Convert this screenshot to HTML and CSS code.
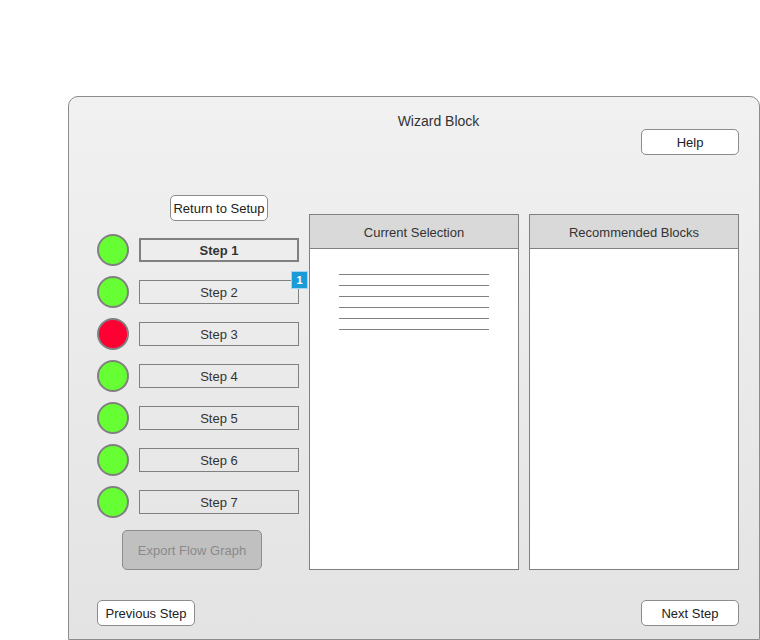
FILE: index.html
```html
<!DOCTYPE html>
<html>
<head>
<meta charset="utf-8">
<link rel="stylesheet" href="styles.css">
</head>
<body>
<div class="window">
  <div class="title">Wizard Block</div>
  <div class="help-row"><button class="btn help">Help</button></div>
  <div class="main">
    <div class="left">
      <button class="btn return">Return to Setup</button>
      <div class="steps">
        <div class="step"><span class="dot green"></span><span class="label active">Step 1</span></div>
        <div class="step"><span class="dot green"></span><span class="label">Step 2<span class="badge">1</span></span></div>
        <div class="step"><span class="dot red"></span><span class="label">Step 3</span></div>
        <div class="step"><span class="dot green"></span><span class="label">Step 4</span></div>
        <div class="step"><span class="dot green"></span><span class="label">Step 5</span></div>
        <div class="step"><span class="dot green"></span><span class="label">Step 6</span></div>
        <div class="step"><span class="dot green"></span><span class="label">Step 7</span></div>
      </div>
      <button class="export">Export Flow Graph</button>
    </div>
    <div class="panel">
      <div class="panel-head">Current Selection</div>
      <div class="panel-body">
        <div class="lines">
          <div class="line"></div><div class="line"></div><div class="line"></div>
          <div class="line"></div><div class="line"></div><div class="line"></div>
        </div>
      </div>
    </div>
    <div class="panel">
      <div class="panel-head">Recommended Blocks</div>
      <div class="panel-body"></div>
    </div>
  </div>
  <div class="footer">
    <button class="btn">Previous Step</button>
    <button class="btn">Next Step</button>
  </div>
</div>
</body>
</html>
```
FILE: styles.css
```css
html, body {
  margin: 0;
  padding: 0;
  background: #ffffff;
}
body {
  padding: 96px 0 0 68px;
  font-family: "Liberation Sans", Arial, sans-serif;
  font-size: 13px;
  color: #333333;
}
.window {
  box-sizing: border-box;
  width: 692px;
  height: 544px;
  border: 1px solid #8c8c8c;
  border-radius: 10px 10px 0 0;
  background: linear-gradient(#f1f1f1, #e3e3e3);
  padding: 16px 20px 0 28px;
  display: flex;
  flex-direction: column;
}
.title {
  height: 16px;
  line-height: 16px;
  font-size: 14px;
  text-align: center;
  padding-left: 41px;
}
.help-row {
  display: flex;
  justify-content: flex-end;
}
.btn {
  box-sizing: border-box;
  width: 98px;
  height: 26px;
  padding: 0;
  border: 1px solid #8c8c8c;
  border-radius: 5px;
  background: #ffffff;
  font-family: "Liberation Sans", Arial, sans-serif;
  font-size: 13px;
  color: #222222;
}
.main {
  margin-top: 40px;
  display: grid;
  grid-template-columns: 202px 210px 210px;
  column-gap: 10px;
}
.left {
  display: flex;
  flex-direction: column;
}
.return {
  margin-left: 73px;
}
.steps {
  margin-top: 13px;
  display: flex;
  flex-direction: column;
  gap: 10px;
}
.step {
  display: flex;
  align-items: center;
  gap: 10px;
  height: 32px;
}
.dot {
  box-sizing: border-box;
  width: 32px;
  height: 32px;
  border-radius: 50%;
  border: 2px solid #808080;
}
.green { background: #66ff33; }
.red { background: #ff0033; }
.label {
  position: relative;
  box-sizing: border-box;
  width: 160px;
  height: 24px;
  line-height: 24px;
  border: 1px solid #808080;
  text-align: center;
  color: #333333;
}
.label.active {
  border-width: 2px;
  line-height: 22px;
  font-weight: bold;
}
.badge {
  position: absolute;
  right: -10px;
  top: -10px;
  box-sizing: border-box;
  width: 17px;
  height: 18px;
  line-height: 16px;
  background: #1a9bd7;
  border: 1px solid #9fd6f0;
  color: #ffffff;
  font-size: 11px;
  font-weight: bold;
  text-align: center;
}
.export {
  box-sizing: border-box;
  margin-top: 12px;
  margin-left: 25px;
  width: 140px;
  height: 40px;
  padding: 0;
  border: 1px solid #8c8c8c;
  border-radius: 5px;
  background: #c0c0c0;
  font-family: "Liberation Sans", Arial, sans-serif;
  font-size: 13px;
  color: #8a8a8a;
}
.panel {
  margin-top: 19px;
  box-sizing: border-box;
  height: 356px;
  border: 1px solid #808080;
  background: #ffffff;
  display: flex;
  flex-direction: column;
}
.panel-head {
  box-sizing: border-box;
  height: 34px;
  padding-top: 1px;
  line-height: 33px;
  border-bottom: 1px solid #808080;
  background: #d9d9d9;
  text-align: center;
  color: #333333;
}
.panel-body {
  flex: 1;
  display: flex;
  justify-content: center;
}
.lines {
  margin-top: 25px;
  width: 150px;
}
.line {
  height: 11px;
  border-top: 1px solid #808080;
  box-sizing: border-box;
}
.footer {
  margin-top: 30px;
  display: flex;
  justify-content: space-between;
}
```
